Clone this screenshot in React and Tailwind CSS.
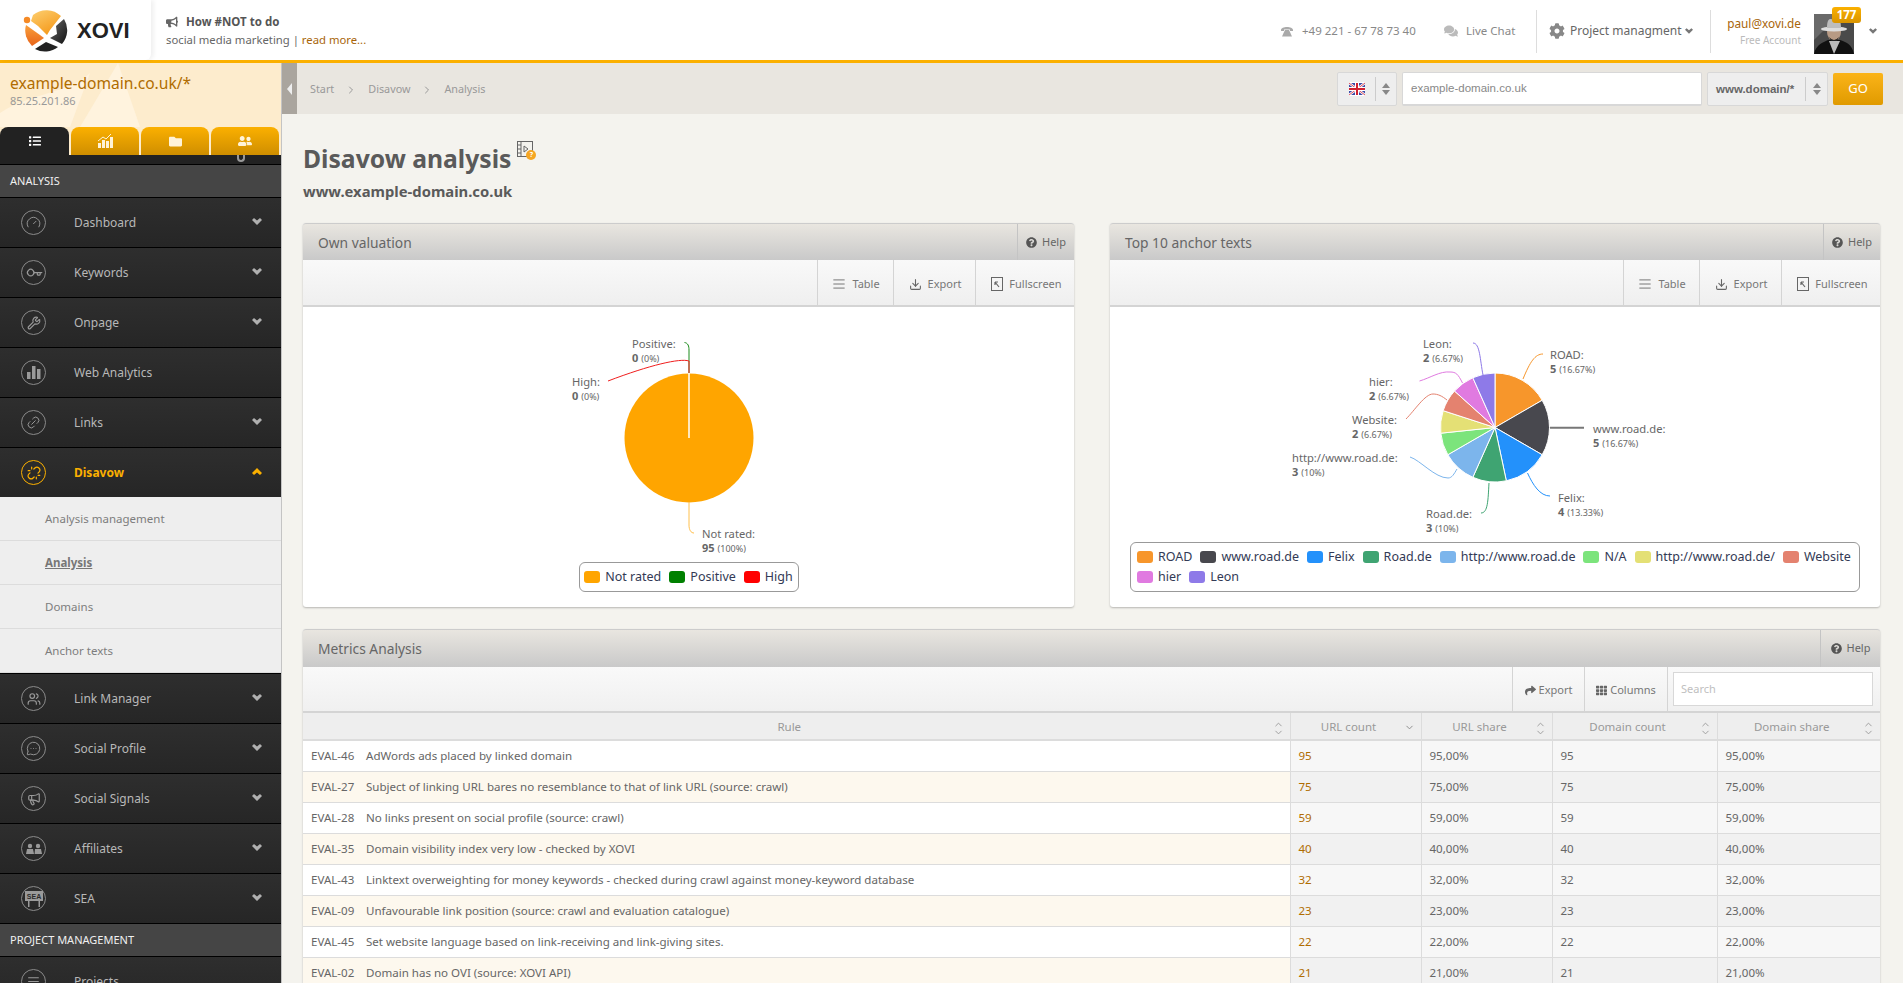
import React from "react";
import { FaBullhorn, FaComments, FaCog, FaList, FaFolder, FaUserFriends, FaQuestionCircle, FaShare, FaTh } from "react-icons/fa";
import { ChevronUp, ChevronDown, ChevronRight, Key, Wrench, Link2, Unlink, Users, MessageCircleMore, Megaphone, Download, AlignJustify, Gauge } from "lucide-react";

const FONT = "font-['Noto_Sans',sans-serif]";

function Logo() {
  return (
    <svg width="46" height="44" viewBox="0 0 46 44" className="shrink-0">
      <defs>
        <linearGradient id="ly" x1="0" y1="0" x2="0.6" y2="1">
          <stop offset="0" stopColor="#fdcf70" />
          <stop offset="1" stopColor="#f59a1c" />
        </linearGradient>
        <linearGradient id="lo" x1="0" y1="0" x2="0" y2="1">
          <stop offset="0" stopColor="#f9a03c" />
          <stop offset="1" stopColor="#e8641a" />
        </linearGradient>
        <linearGradient id="ld" x1="0" y1="0" x2="1" y2="1">
          <stop offset="0" stopColor="#6a6a6a" />
          <stop offset="1" stopColor="#111" />
        </linearGradient>
      </defs>
      <path d="M10 6 A21 21 0 0 1 38 7 L27 21 L24 26 L15 17 L8 12 Z" fill="url(#ly)" />
      <circle cx="4" cy="11" r="3.2" fill="#f58a26" />
      <path d="M3 16 L17 26 L21 29 L9 37 A21 21 0 0 1 3 16 Z" fill="url(#lo)" />
      <path d="M41 10 A21 21 0 0 1 39 35 L27 29 L34 25 L33 17 Z" fill="url(#ld)" />
      <path d="M12 40 L23 33 L35 38 A21 21 0 0 1 12 40 Z" fill="#222" />
    </svg>
  );
}

function Avatar() {
  return (
    <svg width="40" height="40" viewBox="0 0 40 40" className="block">
      <rect width="40" height="40" fill="#4a4a4a" />
      <path d="M0 0 H26 L0 26 Z" fill="#6a6a6a" />
      <path d="M0 40 C2 30 10 28 14 26 L26 26 C32 28 38 30 40 40 Z" fill="#111" />
      <path d="M15 27 L20 40 L26 27 Z" fill="#bbb" />
      <ellipse cx="20" cy="18" rx="7" ry="9" fill="#b79a84" />
      <path d="M15 23 Q20 29 25 23 L23 27 L17 27 Z" fill="#222" />
      <ellipse cx="20" cy="15" rx="13" ry="2.6" fill="#ddd" />
      <path d="M13 14 C13 4 16 4 20 6 C24 4 27 4 27 14 Z" fill="#bdbdbd" />
    </svg>
  );
}

function Flag() {
  return (
    <svg width="16" height="14" viewBox="0 0 16 14" className="block">
      <rect width="16" height="14" fill="#fff" />
      <rect x="0" y="1" width="16" height="12" fill="#3a4aa8" />
      <path d="M0 1 L16 13 M16 1 L0 13" stroke="#fff" strokeWidth="2.4" />
      <path d="M0 1 L16 13 M16 1 L0 13" stroke="#d02030" strokeWidth="0.8" />
      <rect x="6" y="1" width="4" height="12" fill="#fff" />
      <rect x="0" y="5" width="16" height="4" fill="#fff" />
      <rect x="7" y="1" width="2" height="12" fill="#d02030" />
      <rect x="0" y="6" width="16" height="2" fill="#d02030" />
    </svg>
  );
}

function OldPhone() {
  return (
    <svg width="12" height="11" viewBox="0 0 12 11" fill="#aaa" className="mr-[9px]">
      <path d="M0 4 C0 0 12 0 12 4 L12 5 L9 5 L9 3.5 L3 3.5 L3 5 L0 5 Z" />
      <path d="M3.5 5 L4 4 L8 4 L8.5 5 L11 10.5 L1 10.5 Z" />
    </svg>
  );
}

function HeavyChevron({ up, className, w = 10, h = 7 }) {
  return (
    <svg width={w} height={h} viewBox="0 0 10 7" fill="currentColor" className={className}>
      {up ? <path d="M0 5 L2 7 L5 4.5 L8 7 L10 5 L5 0 Z" /> : <path d="M0 2 L2 0 L5 2.5 L8 0 L10 2 L5 7 Z" />}
    </svg>
  );
}

function Header() {
  return (
    <header className="h-[63px] shrink-0 bg-white border-b-[3px] border-[#fbb000] flex items-center relative z-10">
      <div className="w-[151px] h-full shrink-0 flex items-center pl-[23px] pt-[1px] gap-[8px] shadow-[3px_0_4px_rgba(0,0,0,0.06)] rounded-br-md">
        <Logo />
        <span className="font-['Liberation_Sans',sans-serif] font-bold text-[22px] text-[#222]">XOVI</span>
      </div>
      <div className="pl-[15px] pt-[2px] flex flex-col gap-[4px] text-[11.3px] leading-[14px] text-[#666]">
        <div className="flex items-center gap-[8px] font-bold text-[#555] text-[11.5px]">
          <FaBullhorn className="text-[12px] text-[#666]" />
          <span>How #NOT to do</span>
        </div>
        <div>
          social media marketing | <span className="text-[#a8650a]">read more...</span>
        </div>
      </div>
      <div className="ml-auto flex items-center h-full pt-[2px] text-[12px] text-[#888]">
        <OldPhone />
        <span className="w-[142px] text-[11.5px]">+49 221 - 67 78 73 40</span>
        <FaComments className="text-[14px] text-[#bbb] mr-[8px]" />
        <span className="w-[70px] text-[11.5px]">Live Chat</span>
        <div className="w-px h-[43px] bg-[#ddd]" />
        <FaCog className="text-[16px] text-[#888] ml-[12px] mr-[5px]" />
        <span className="text-[#666] w-[115px]">Project managment</span>
        <HeavyChevron w={8} h={6} className="text-[#777]" />
        <div className="w-px h-[43px] bg-[#ddd] ml-[17px]" />
        <div className="w-[90px] flex flex-col items-end">
          <span className="text-[#a8650a] leading-[16px] text-[11.8px]">paul@xovi.de</span>
          <span className="text-[10px] text-[#bbb] leading-[14px] mt-[2px]">Free Account</span>
        </div>
        <div className="relative ml-[13px] mt-[6px]">
          <Avatar />
          <div className="absolute top-[-7px] left-[18px] w-[29px] h-[16px] rounded-[3px] bg-gradient-to-b from-[#fbb000] to-[#d99400] text-white font-bold text-[11.5px] leading-[16px] text-center">177</div>
        </div>
        <HeavyChevron w={8} h={6} className="text-[#777] ml-[15px] mr-[26px]" />
      </div>
    </header>
  );
}

function RoundIcon({ active, children }) {
  return (
    <div className={active ? "w-[25px] h-[25px] rounded-full border border-[#fbb000] flex items-center justify-center text-[#fbb000]" : "w-[25px] h-[25px] rounded-full border border-[#8a8a8a] flex items-center justify-center text-[#9a9a9a]"}>
      {children}
    </div>
  );
}

function Bars() {
  return (
    <svg width="14" height="13" viewBox="0 0 14 13" fill="currentColor">
      <rect x="0" y="6" width="3.5" height="7" />
      <rect x="5" y="0" width="3.5" height="13" />
      <rect x="10" y="3" width="3.5" height="10" />
    </svg>
  );
}

function TwoPeople() {
  return (
    <svg width="16" height="11" viewBox="0 0 16 11" fill="currentColor">
      <circle cx="4" cy="3" r="2.2" />
      <path d="M0 11 L1 6 L7 6 L8 11 Z" />
      <circle cx="12" cy="3" r="2.2" />
      <path d="M8.5 11 L9 6 L15 6 L16 11 Z" />
    </svg>
  );
}

function SeaIcon() {
  return (
    <svg width="18" height="16" viewBox="0 0 18 16">
      <rect x="0" y="0" width="18" height="10" fill="currentColor" />
      <text x="9" y="8" textAnchor="middle" fontSize="7" fontWeight="700" fill="#2a2a2a" fontFamily="Liberation Sans">SEA</text>
      <rect x="3" y="10" width="1.5" height="6" fill="currentColor" />
      <rect x="13.5" y="10" width="1.5" height="6" fill="currentColor" />
    </svg>
  );
}

function MenuItem({ icon, label, chevron = true, active = false }) {
  return (
    <div className="h-[50px] shrink-0 border-t border-black bg-gradient-to-b from-[#2e2e2e] to-[#262626] flex items-center pl-[21px] pr-[19px]">
      <RoundIcon active={active}>{icon}</RoundIcon>
      <span className={active ? "ml-[28px] text-[12px] font-bold text-[#fbb000]" : "ml-[28px] text-[12px] text-[#b8b8b8]"}>{label}</span>
      {chevron && <HeavyChevron up={active} className={active ? "ml-auto mb-[3px] text-[#fbb000]" : "ml-auto mb-[3px] text-[#b0b0b0]"} />}
    </div>
  );
}

function SectionHead({ children }) {
  return <div className="h-[33px] shrink-0 bg-[#454545] border-t border-black flex items-center pl-[10px] text-[11px] text-[#f0f0f0]">{children}</div>;
}

function SubItem({ children, current }) {
  return (
    <div className={current ? "h-[44px] shrink-0 flex items-center pl-[45px] text-[11.5px] text-[#777] font-bold underline border-b border-[#dcdcdc]" : "h-[44px] shrink-0 flex items-center pl-[45px] text-[11.5px] text-[#7d7d7d] border-b border-[#dcdcdc]"}>
      {children}
    </div>
  );
}

function Tab({ dark, children }) {
  return (
    <div className={dark ? "w-[69px] h-[28px] rounded-t-[8px] bg-[#222] flex items-center justify-center text-white" : "w-[68px] h-[28px] rounded-t-[8px] bg-gradient-to-b from-[#fbb000] to-[#cf8e00] flex items-center justify-center text-[#fff3d8]"}>
      {children}
    </div>
  );
}

function Sidebar() {
  return (
    <aside className="w-[282px] shrink-0 border-r border-[#c4c4c4] flex flex-col bg-[#eee] overflow-hidden">
      <div className="h-[64px] bg-[#fdeccd] pl-[10px] pt-[9px] relative overflow-hidden shrink-0">
        <svg className="absolute left-0 top-0" width="281" height="64" viewBox="0 0 281 64">
          <path d="M80 64 L118 0 L140 64 Z" fill="#fff3de" />
          <path d="M0 50 C30 30 70 30 90 10 L70 64 L0 64 Z" fill="#fff3de" />
        </svg>
        <div className="relative text-[15.6px] leading-[22px] text-[#b06c00]">example-domain.co.uk/*</div>
        <div className="relative text-[11px] leading-[14px] text-[#999]">85.25.201.86</div>
      </div>
      <div className="bg-[#fdeccd] flex gap-[2px] shrink-0">
        <Tab dark><FaList className="text-[12px]" /></Tab>
        <Tab>
          <svg width="15" height="14" viewBox="0 0 15 14" fill="currentColor">
            <rect x="0" y="9" width="3" height="5" />
            <rect x="4" y="6" width="3" height="8" />
            <rect x="8" y="7" width="3" height="7" />
            <rect x="12" y="3" width="3" height="11" />
            <path d="M0 7 L5 3 L8 5 L13 0" stroke="currentColor" fill="none" />
          </svg>
        </Tab>
        <Tab><FaFolder className="text-[13px]" /></Tab>
        <Tab><FaUserFriends className="text-[14px]" /></Tab>
      </div>
      <div className="h-[9px] bg-[#222] relative shrink-0">
        <div className="absolute left-[237px] top-0 w-[8px] h-[7px] border-x-2 border-b-2 border-[#999] rounded-b-full" />
      </div>
      <SectionHead>ANALYSIS</SectionHead>
      <MenuItem icon={<Gauge size={15} strokeWidth={1.5} />} label="Dashboard" />
      <MenuItem icon={<Key size={14} strokeWidth={2} className="rotate-[45deg]" />} label="Keywords" />
      <MenuItem icon={<Wrench size={14} strokeWidth={2} />} label="Onpage" />
      <MenuItem icon={<Bars />} label="Web Analytics" chevron={false} />
      <MenuItem icon={<Link2 size={15} strokeWidth={1.5} className="-rotate-45" />} label="Links" />
      <MenuItem icon={<Unlink size={14} strokeWidth={2} />} label="Disavow" active />
      <SubItem>Analysis management</SubItem>
      <SubItem current>Analysis</SubItem>
      <SubItem>Domains</SubItem>
      <SubItem>Anchor texts</SubItem>
      <MenuItem icon={<Users size={14} strokeWidth={2} />} label="Link Manager" />
      <MenuItem icon={<MessageCircleMore size={15} strokeWidth={1.5} />} label="Social Profile" />
      <MenuItem icon={<Megaphone size={14} strokeWidth={2} />} label="Social Signals" />
      <MenuItem icon={<TwoPeople />} label="Affiliates" />
      <MenuItem icon={<SeaIcon />} label="SEA" />
      <SectionHead>PROJECT MANAGEMENT</SectionHead>
      <MenuItem icon={<AlignJustify size={13} />} label="Projects" chevron={false} />
    </aside>
  );
}

function Updown() {
  return (
    <div className="flex flex-col items-center gap-[2px]">
      <span className="w-0 h-0 border-x-[4px] border-x-transparent border-b-[5px] border-b-[#888]" />
      <span className="w-0 h-0 border-x-[4px] border-x-transparent border-t-[5px] border-t-[#888]" />
    </div>
  );
}

function TopBar() {
  return (
    <div className="h-[51px] shrink-0 bg-[#e9e6e0] flex items-center">
      <div className="w-[15px] h-full bg-[#aaa59e] flex items-center justify-center text-[#eee]">
        <span className="w-0 h-0 border-y-[6px] border-y-transparent border-r-[5px] border-r-[#eee]" />
      </div>
      <nav className="ml-[13px] pt-[2px] flex items-center text-[10.8px] text-[#999]">
        <span>Start</span>
        <ChevronRight size={12} className="mx-[11px] text-[#999]" />
        <span>Disavow</span>
        <ChevronRight size={12} className="mx-[11px] text-[#999]" />
        <span>Analysis</span>
      </nav>
      <div className="ml-auto mr-[20px] flex items-center h-[34px]">
        <div className="w-[60px] h-full border border-[#d8d8d8] rounded-[2px] bg-[#eeeeee] flex items-center">
          <div className="w-[37px] h-full flex items-center justify-center"><Flag /></div>
          <div className="w-px h-[24px] bg-[#ccc]" />
          <div className="flex-1 flex justify-center"><Updown /></div>
        </div>
        <div className="w-[300px] h-full ml-[5px] bg-white border border-[#d8d8d8] border-b-2 rounded-[2px] flex items-center pl-[8px] pt-[1px] font-['Liberation_Sans',sans-serif] text-[11.5px] text-[#888]">example-domain.co.uk</div>
        <div className="w-[121px] h-full ml-[5px] border border-[#d8d8d8] rounded-[2px] bg-[#eeeeee] flex items-center">
          <span className="w-[97px] pl-[8px] pt-[2px] font-['Liberation_Sans',sans-serif] font-bold text-[11.5px] text-[#666]">www.domain/*</span>
          <div className="w-px h-[24px] bg-[#ccc]" />
          <div className="flex-1 flex justify-center"><Updown /></div>
        </div>
        <div className="w-[50px] h-[32px] ml-[5px] rounded-[2px] bg-gradient-to-b from-[#fbb417] to-[#e09a00] text-white text-[13px] flex items-center justify-center">GO</div>
      </div>
    </div>
  );
}

function PanelHead({ title, helpW, h = "h-[37px]" }) {
  return (
    <div className={h + " bg-gradient-to-b from-[#e9e6e0] to-[#c9c9c9] flex items-center rounded-t-[3px] border-t border-[#ccc]"}>
      <span className="ml-[15px] pt-[2px] text-[13.8px] text-[#666]">{title}</span>
      <div className={helpW + " ml-auto h-full border-l border-[#c4c4c4] flex items-center justify-center gap-[5px] text-[11px] text-[#666]"}>
        <FaQuestionCircle className="text-[11px] text-[#555]" />
        <span>Help</span>
      </div>
    </div>
  );
}

function Tool({ w, icon, label, gap = "gap-[6px]" }) {
  return (
    <div className={w + " " + gap + " h-full border-l border-[#d4d4d4] flex items-center justify-center pt-[3px] text-[11px] text-[#777]"}>
      {icon}
      <span>{label}</span>
    </div>
  );
}

function FullscreenIcon() {
  return (
    <svg width="12" height="14" viewBox="0 0 12 14" fill="none" stroke="#666">
      <rect x="0.5" y="0.5" width="11" height="13" />
      <path d="M4 5 H7 M4 5 V8 M4 5 L8 10" strokeWidth="1.2" />
    </svg>
  );
}

function ChartToolbar() {
  return (
    <div className="h-[47px] flex justify-end bg-gradient-to-b from-[#f9f9f9] to-[#efefef] border-b-2 border-[#d4d4d4]">
      <Tool w="w-[76px] pl-[1px]" icon={<AlignJustify size={14} strokeWidth={1.5} className="text-[#666]" />} label="Table" />
      <Tool w="w-[82px] pl-[1px]" icon={<Download size={13} strokeWidth={2} className="text-[#666]" />} label="Export" />
      <Tool w="w-[99px] pl-[3px]" icon={<FullscreenIcon />} label="Fullscreen" />
    </div>
  );
}

function Panel({ title, children, helpW = "w-[57px]", h }) {
  return (
    <section className="bg-white rounded-[3px] shadow-[0_1px_2px_rgba(0,0,0,0.25)]">
      <PanelHead title={title} helpW={helpW} h={h} />
      {children}
    </section>
  );
}

function wedge(cx, cy, r, from, to) {
  const rad = (a) => ((a - 90) * Math.PI) / 180;
  const x1 = cx + r * Math.cos(rad(from));
  const y1 = cy + r * Math.sin(rad(from));
  const x2 = cx + r * Math.cos(rad(to));
  const y2 = cy + r * Math.sin(rad(to));
  return `M${cx} ${cy} L${x1} ${y1} A${r} ${r} 0 ${to - from > 180 ? 1 : 0} 1 ${x2} ${y2} Z`;
}

function Lab({ x, y, name, val, pct }) {
  return (
    <g fontFamily="Noto Sans" fontSize="11.2" fill="#666">
      <text x={x} y={y + 4}>{name}</text>
      <text x={x} y={y + 18}>
        <tspan fontWeight="700" fontSize="11">{val}</tspan>
        <tspan fontSize="9" dx="3">{pct}</tspan>
      </text>
    </g>
  );
}

function Legend({ items, className }) {
  return (
    <div className={className}>
      {items.map(([c, t]) => (
        <div key={t} className="flex items-center gap-[5px] h-[20px]">
          <span className="w-[16px] h-[12px] rounded-[3px]" style={{ background: c }} />
          <span className="text-[12.5px] text-[#333a55]">{t}</span>
        </div>
      ))}
    </div>
  );
}

function OwnChart() {
  return (
    <svg width="771" height="255" viewBox="303 307 771 255" className="block">
      <circle cx="689" cy="438" r="64.5" fill="#ffa500" />
      <path d="M689 438 V373" stroke="#fff" strokeWidth="1.5" />
      <path d="M689 373 V350 C689 346 688 343 684.5 342.5" stroke="#1a8a1a" fill="none" />
      <path d="M689 373 V361 C680 358 650 365 608 381" stroke="#f01e1e" fill="none" />
      <path d="M689 502 V525 C689 530 691 533 694 533" stroke="#ffc04d" fill="none" />
      <Lab x={632} y={344} name="Positive:" val="0" pct="(0%)" />
      <Lab x={572} y={382} name="High:" val="0" pct="(0%)" />
      <Lab x={702} y={534} name="Not rated:" val="95" pct="(100%)" />
    </svg>
  );
}

const SLICES = [
  ["#f7962b", "ROAD", 60],
  ["#48484e", "www.road.de", 60],
  ["#2391fb", "Felix", 48],
  ["#3fa472", "Road.de", 36],
  ["#7cb5ec", "http://www.road.de", 36],
  ["#7ce47c", "N/A", 24],
  ["#e4e075", "http://www.road.de/", 24],
  ["#e4826f", "Website", 24],
  ["#e07ae0", "hier", 24],
  ["#8e7ae8", "Leon", 24],
];

function AnchorChart() {
  let a = 0;
  const paths = SLICES.map(([c, t, d]) => {
    const p = wedge(1495, 427.5, 54.5, a, a + d);
    a += d;
    return <path key={t} d={p} fill={c} stroke="#fff" strokeWidth="1" />;
  });
  return (
    <svg width="770" height="235" viewBox="1110 307 770 235" className="block">
      {paths}
      <g fill="none">
        <path d="M1523 379 C1530 362 1535 354 1543 354" stroke="#f7962b" />
        <path d="M1550 427.7 H1584" stroke="#777" strokeWidth="2" />
        <path d="M1527.5 473 C1533 485 1540 496 1550 496" stroke="#2391fb" />
        <path d="M1489 483 C1488 500 1488 513 1481 513" stroke="#3fa472" />
        <path d="M1410 457 C1420 460 1435 478 1448 478 C1452 478 1454 474 1457 469" stroke="#7cb5ec" />
        <path d="M1447 400 C1442 396 1438 394 1433 394 C1425 394 1415 410 1406 419" stroke="#e4826f" />
        <path d="M1462.5 383 C1458 374 1456 372 1450 372 C1440 371 1430 378 1419.5 381" stroke="#e07ae0" />
        <path d="M1483 375 C1480 360 1480 343 1473 343" stroke="#8e7ae8" />
      </g>
      <Lab x={1550} y={355} name="ROAD:" val="5" pct="(16.67%)" />
      <Lab x={1593} y={429} name="www.road.de:" val="5" pct="(16.67%)" />
      <Lab x={1558} y={498} name="Felix:" val="4" pct="(13.33%)" />
      <Lab x={1426} y={514} name="Road.de:" val="3" pct="(10%)" />
      <Lab x={1292} y={458} name="http://www.road.de:" val="3" pct="(10%)" />
      <Lab x={1352} y={420} name="Website:" val="2" pct="(6.67%)" />
      <Lab x={1369} y={382} name="hier:" val="2" pct="(6.67%)" />
      <Lab x={1423} y={344} name="Leon:" val="2" pct="(6.67%)" />
    </svg>
  );
}

function Sort({ active }) {
  return active ? (
    <ChevronDown size={11} className="absolute right-[6px] top-[9px] text-[#888]" />
  ) : (
    <div className="absolute right-[6px] top-[6px] flex flex-col text-[#999]">
      <ChevronUp size={11} className="mb-[-3px]" />
      <ChevronDown size={11} />
    </div>
  );
}

const RULES = [
  ["EVAL-46", "AdWords ads placed by linked domain", 95],
  ["EVAL-27", "Subject of linking URL bares no resemblance to that of link URL (source: crawl)", 75],
  ["EVAL-28", "No links present on social profile (source: crawl)", 59],
  ["EVAL-35", "Domain visibility index very low - checked by XOVI", 40],
  ["EVAL-43", "Linktext overweighting for money keywords - checked during crawl against money-keyword database", 32],
  ["EVAL-09", "Unfavourable link position (source: crawl and evaluation catalogue)", 23],
  ["EVAL-45", "Set website language based on link-receiving and link-giving sites.", 22],
  ["EVAL-02", "Domain has no OVI (source: XOVI API)", 21],
];

function Th({ children, w, active }) {
  return (
    <th className={w + " relative h-[27px] p-0 pr-[14px] pt-[1px] font-normal text-[11.5px] text-[#999] text-center border-r border-[#dcdcdc] last:border-r-0"}>
      {children}
      <Sort active={active} />
    </th>
  );
}

function MetricsTable() {
  return (
    <table className="w-full table-fixed border-collapse">
      <thead className="bg-[#eeeeee] border-b-2 border-[#dcdcdc]">
        <tr>
          <Th w="w-[987px]">Rule</Th>
          <Th w="w-[131px]" active>URL count</Th>
          <Th w="w-[131px]">URL share</Th>
          <Th w="w-[165px]">Domain count</Th>
          <Th>Domain share</Th>
        </tr>
      </thead>
      <tbody className="text-[11.55px] text-[#666]">
        {RULES.map(([id, text, n], i) => {
          const rule = i % 2 ? "bg-[#fdf8ee]" : "bg-white";
          const rest = i % 2 ? "bg-[#f1f1f1]" : "bg-[#f7f7f7]";
          return (
            <tr key={id} className="h-[31px] border-b border-[#dcdcdc]">
              <td className={rule + " px-[8px] whitespace-nowrap"}>
                <span className="inline-block w-[55px]">{id}</span>
                {text}
              </td>
              <td className={rest + " px-[8px] text-[#b06c00] border-l border-[#dcdcdc]"}>{n}</td>
              <td className={rest + " px-[8px] border-l border-[#dcdcdc]"}>{n},00%</td>
              <td className={rest + " px-[8px] border-l border-[#dcdcdc]"}>{n}</td>
              <td className={rest + " px-[8px] border-l border-[#dcdcdc]"}>{n},00%</td>
            </tr>
          );
        })}
      </tbody>
    </table>
  );
}

export default function App() {
  return (
    <div className={FONT + " h-[983px] w-full overflow-hidden flex flex-col bg-[#f4f3ee]"}>
      <Header />
      <div className="flex flex-1 min-h-0">
        <Sidebar />
        <main className="flex-1 min-w-0 flex flex-col">
          <TopBar />
          <div className="pl-[21px] pr-[23px] flex-1">
            <h1 className="mt-[30px] text-[24.7px] leading-[30px] font-bold text-[#5a5a5a] flex items-start">
              Disavow analysis
              <span className="relative ml-[6px] mt-[-3px] w-[20px] h-[20px]">
                <svg width="16" height="16" viewBox="0 0 16 16" fill="none" stroke="#666">
                  <rect x="0.5" y="0.5" width="15" height="15" />
                  <path d="M4 0.5 V15.5 M0.5 4 H4 M0.5 8 H4 M0.5 12 H4 M7 5 L11 8 L7 11 Z" />
                </svg>
                <span className="absolute left-[9px] top-[9px] w-[10px] h-[10px] rounded-full bg-[#f5a623] text-white text-[7px] leading-[10px] text-center">?</span>
              </span>
            </h1>
            <h2 className="mt-[8px] text-[14.8px] leading-[18px] font-bold text-[#5a5a5a]">www.example-domain.co.uk</h2>
            <div className="mt-[23px] grid grid-cols-[771px_770px] gap-x-[36px]">
              <Panel title="Own valuation">
                <ChartToolbar />
                <OwnChart />
                <div className="flex justify-center pb-[15px]">
                  <Legend
                    className="h-[30px] w-[220px] border border-[#999] rounded-[6px] flex items-center justify-center gap-[8px]"
                    items={[["#ffa500", "Not rated"], ["#008000", "Positive"], ["#ff0000", "High"]]}
                  />
                </div>
              </Panel>
              <Panel title="Top 10 anchor texts">
                <ChartToolbar />
                <AnchorChart />
                <div className="px-[20px] pb-[15px]">
                  <Legend
                    className="h-[50px] border border-[#999] rounded-[6px] flex flex-wrap items-center gap-x-[8px] px-[6px] content-center"
                    items={SLICES.map(([c, t]) => [c, t])}
                  />
                </div>
              </Panel>
            </div>
            <div className="mt-[22px]">
              <Panel title="Metrics Analysis" helpW="w-[60px]" h="h-[38px]">
                <div className="h-[46px] flex justify-end bg-gradient-to-b from-[#f9f9f9] to-[#f0f0f0] border-b-2 border-[#d4d4d4]">
                  <Tool w="w-[72px]" gap="gap-[3px]" icon={<FaShare className="text-[11px] text-[#666]" />} label="Export" />
                  <Tool w="w-[83px]" gap="gap-[3px]" icon={<FaTh className="text-[11px] text-[#666]" />} label="Columns" />
                  <div className="w-[213px] h-full border-l border-[#d4d4d4] flex items-center pl-[5px]">
                    <div className="w-[200px] h-[34px] bg-white border border-[#d8d8d8] flex items-center pl-[7px] text-[11px] text-[#c0c0c0]">Search</div>
                  </div>
                </div>
                <MetricsTable />
              </Panel>
            </div>
          </div>
        </main>
      </div>
    </div>
  );
}
